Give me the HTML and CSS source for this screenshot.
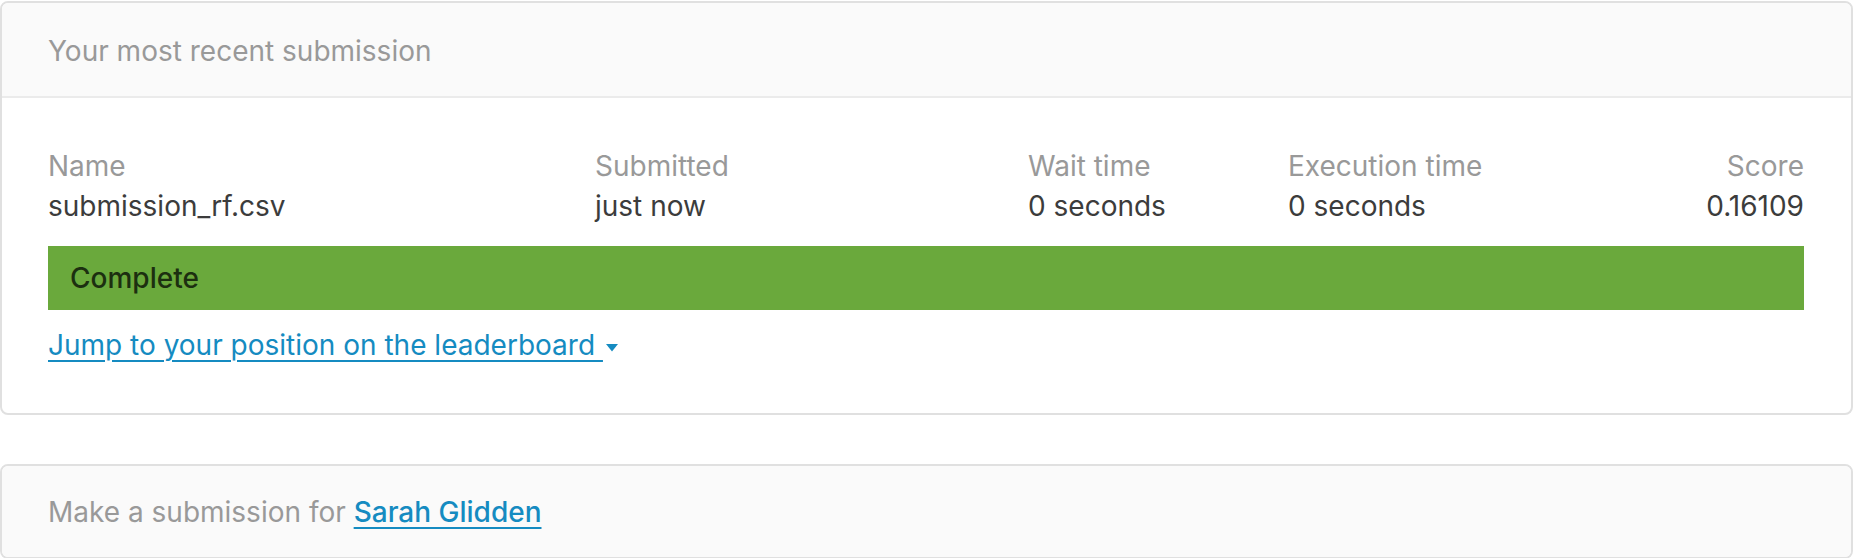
FILE: index.html
```html
<!DOCTYPE html>
<html lang="en">
<head>
<meta charset="utf-8">
<title>Your most recent submission</title>
<link rel="stylesheet" href="styles.css">
</head>
<body>
  <section class="card">
    <header class="card-header">Your most recent submission</header>
    <div class="card-body">
      <div class="stats">
        <div class="stat">
          <div class="stat-label">Name</div>
          <div class="stat-value">submission_rf.csv</div>
        </div>
        <div class="stat">
          <div class="stat-label">Submitted</div>
          <div class="stat-value">just now</div>
        </div>
        <div class="stat">
          <div class="stat-label">Wait time</div>
          <div class="stat-value">0 seconds</div>
        </div>
        <div class="stat">
          <div class="stat-label">Execution time</div>
          <div class="stat-value">0 seconds</div>
        </div>
        <div class="stat stat-right">
          <div class="stat-label">Score</div>
          <div class="stat-value">0.16109</div>
        </div>
      </div>
      <div class="status">Complete</div>
      <a class="jump-link" href="#">Jump to your position on the leaderboard <svg class="caret" width="12" height="8" viewBox="0 0 12 8" aria-hidden="true"><path d="M0 0h12L6 7.5z" fill="currentColor"/></svg></a>
    </div>
  </section>

  <section class="card card-second">
    <header class="card-header card-header-only">Make a submission for <a class="name-link" href="#">Sarah Glidden</a></header>
  </section>
</body>
</html>
```

FILE: styles.css
```css
html, body {
  margin: 0;
  padding: 0;
  background: #ffffff;
}

body {
  font-family: Inter, "Noto Sans", "Liberation Sans", sans-serif;
  font-size: 28px;
  line-height: 40px;
  color: #3c3c3c;
  padding-top: 1px;
}

.card {
  margin-right: 3px;
  border: 2px solid #e0e0e0;
  border-radius: 8px;
  background: #ffffff;
  overflow: hidden;
}

.card-second {
  margin-top: 49px;
  background: #fafafa;
}

.card-header {
  background: #fafafa;
  color: #999999;
  padding: 28px 47px 25px 46px;
  border-bottom: 2px solid #ebebeb;
}

.card-header-only {
  border-bottom: none;
  padding-top: 26px;
}

.card-body {
  padding: 48px 47px 48px 46px;
}

.stats {
  display: grid;
  grid-template-columns: 547px 433px 260px 1fr auto;
}

.stat-label {
  color: #999999;
}

.stat-value {
  color: #3c3c3c;
}

.stat-right {
  text-align: right;
}

.status {
  margin-top: 20px;
  height: 64px;
  display: flex;
  align-items: center;
  padding: 0 22px;
  background: #6aa93c;
  color: #1c2f10;
  font-weight: 500;
}

.jump-link {
  display: inline-block;
  margin-top: 15px;
  color: #158bc1;
  text-decoration: underline;
  text-decoration-thickness: 2px;
  text-underline-offset: 5px;
}

.caret {
  display: inline-block;
  margin-left: 3px;
  vertical-align: 3px;
  color: #158bc1;
}

.name-link {
  color: #158bc1;
  font-weight: 500;
  text-decoration: underline;
  text-decoration-thickness: 2px;
  text-underline-offset: 5px;
}
```
